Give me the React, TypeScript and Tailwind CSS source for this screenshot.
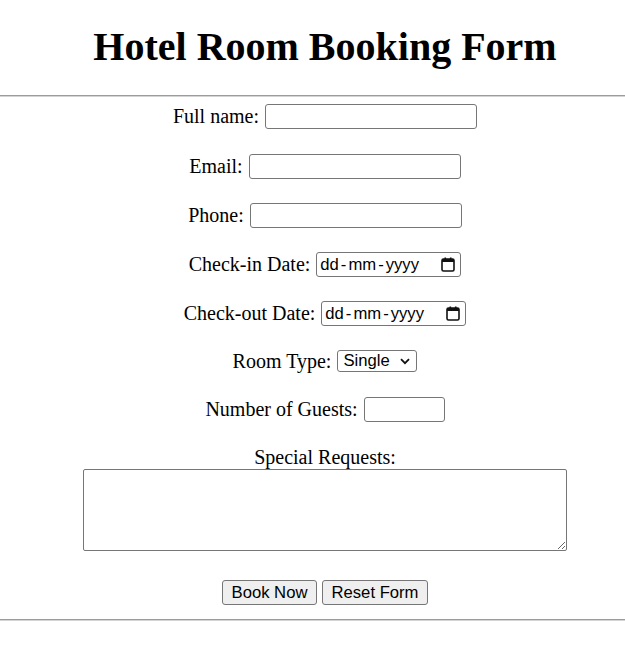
import type { ReactNode } from 'react'

const serif = "font-['Liberation_Serif','Times_New_Roman',serif]"
const sans = "font-['Liberation_Sans',Arial,sans-serif]"

type RowProps = {
  label: string
  className?: string
  children: ReactNode
}
function Row({ label, className, children }: RowProps) {
  return (
    <div className={`flex items-center justify-center gap-[6px] ${className ?? ''}`}>
      <label className="leading-[23px]">{label}</label>
      {children}
    </div>
  )
}

function TextBox({ width, type = 'text' }: { width: string; type?: string }) {
  return (
    <input
      type={type}
      className={`${width} h-[25px] rounded-[3px] border border-[#767676] bg-white px-[2px] text-[16px] outline-none ${sans}`}
    />
  )
}

function CalendarIcon() {
  return (
    <svg width="14" height="15" viewBox="0 0 14 15" className="shrink-0">
      <rect x="1" y="2" width="12" height="12" rx="1.5" fill="none" stroke="#111" strokeWidth="1.6" />
      <rect x="1" y="2" width="12" height="3" fill="#111" />
      <rect x="3.5" y="0.5" width="1.6" height="3" fill="#111" />
      <rect x="8.9" y="0.5" width="1.6" height="3" fill="#111" />
    </svg>
  )
}

function DateBox({ width }: { width: string }) {
  return (
    <div
      className={`${width} flex h-[25px] items-center rounded-[3px] border border-[#767676] bg-white pl-[3px] pr-[5px] text-[16.67px] text-black ${sans}`}
    >
      <span>dd</span>
      <span className="mx-[2px]">-</span>
      <span>mm</span>
      <span className="mx-[2px]">-</span>
      <span>yyyy</span>
      <span className="flex-1" />
      <CalendarIcon />
    </div>
  )
}

function SelectBox() {
  return (
    <div
      className={`flex h-[22px] w-[80px] items-center rounded-[3px] border border-[#767676] bg-white pl-[5px] pr-[6px] text-[16.67px] text-black ${sans}`}
    >
      <span className="leading-[20px]">Single</span>
      <span className="flex-1" />
      <svg width="10" height="7" viewBox="0 0 10 7">
        <path d="M1 1.2 L5 5.2 L9 1.2" fill="none" stroke="#111" strokeWidth="1.8" />
      </svg>
    </div>
  )
}

export default function App() {
  return (
    <div className={`min-h-[653px] w-full overflow-hidden bg-white text-[20px] text-black ${serif}`}>
      <div className="pl-[25px] text-center">
        <h1 className="pt-[24px] pb-[25px] text-[40px] font-bold leading-[46px]">
          Hotel Room Booking Form
        </h1>
      </div>
      <div className="h-[2px] border-t border-b border-t-[#9c9c9c] border-b-[#d4d4d4]" />

      <form className="pl-[25px]" onSubmit={(e) => e.preventDefault()}>
        <Row label="Full name:" className="mt-[7px] h-[25px]">
          <TextBox width="w-[212px]" />
        </Row>
        <Row label="Email:" className="mt-[25px] h-[25px]">
          <TextBox width="w-[212px]" type="email" />
        </Row>
        <Row label="Phone:" className="mt-[24px] h-[25px]">
          <TextBox width="w-[212px]" type="tel" />
        </Row>
        <Row label="Check-in Date:" className="mt-[24px] h-[25px]">
          <DateBox width="w-[145px]" />
        </Row>
        <Row label="Check-out Date:" className="mt-[24px] h-[25px]">
          <DateBox width="w-[145px]" />
        </Row>
        <Row label="Room Type:" className="mt-[24px] h-[22px]">
          <SelectBox />
        </Row>
        <Row label="Number of Guests:" className="mt-[25px] h-[25px]">
          <TextBox width="w-[81px]" type="number" />
        </Row>

        <div className="mt-[24px] text-center leading-[23px]">Special Requests:</div>
        <div className="flex justify-center">
          <textarea className="block h-[82px] w-[484px] rounded-[2px] border border-[#767676] bg-white outline-none" />
        </div>

        <div className={`mt-[29px] flex justify-center gap-[5px] text-[16.67px] ${sans}`}>
          <button
            type="submit"
            className="h-[25px] w-[95px] rounded-[3px] border border-[#767676] bg-[#efefef] leading-[23px]"
          >
            Book Now
          </button>
          <button
            type="reset"
            className="h-[25px] w-[106px] rounded-[3px] border border-[#767676] bg-[#efefef] leading-[23px]"
          >
            Reset Form
          </button>
        </div>
      </form>

      <div className="mt-[14px] h-[2px] border-t border-b border-t-[#9c9c9c] border-b-[#d4d4d4]" />
    </div>
  )
}
